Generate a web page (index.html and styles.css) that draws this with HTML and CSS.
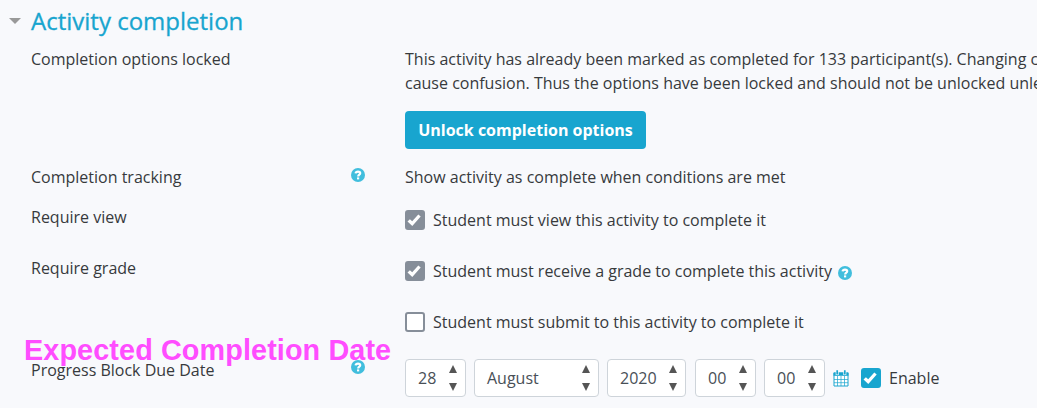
FILE: index.html
```html
<!DOCTYPE html>
<html lang="en">
<head>
    <meta charset="UTF-8">
    <meta name="viewport" content="width=device-width, initial-scale=1.0">
    <title>Activity completion</title>
    <link rel="stylesheet" href="styles.css">
</head>
<body>
    <!-- Shared icons -->
    <svg class="icon-defs" aria-hidden="true">
        <symbol id="icon-help" viewBox="0 0 14 14">
            <circle cx="7" cy="7" r="7" fill="#41bedd"/>
            <path d="M4.600 5.300C4.800 4 5.800 3.600 7 3.600c1.300 0 2.200.6 2.200 1.700C9.200 6.800 7.200 6.600 7.200 8.500" fill="none" stroke="#fff" stroke-width="2.200"/>
            <rect x="6" y="9.400" width="2.200" height="2" fill="#fff"/>
        </symbol>
        <symbol id="icon-check" viewBox="0 0 20 20">
            <path d="M2.500 11.500L4.900 9.300L7.200 11.300L13.300 4.600L15.700 6.600L7.300 15.900z" fill="#fff"/>
        </symbol>
    </svg>

    <main>
        <header>
            <span class="caret"></span>
            <h1>Activity completion</h1>
        </header>

        <div class="form-row row-locked">
            <div class="label">Completion options locked</div>
            <div class="field">
                <p>This activity has already been marked as completed for 133 participant(s). Changing completion options may<br>cause confusion. Thus the options have been locked and should not be unlocked unless absolutely necessary.</p>
                <button class="unlock-button">Unlock completion options</button>
            </div>
        </div>

        <div class="form-row row-tracking">
            <div class="label">Completion tracking <svg class="help"><use href="#icon-help"/></svg></div>
            <div class="field">Show activity as complete when conditions are met</div>
        </div>

        <div class="form-row">
            <div class="label">Require view</div>
            <div class="field check-line">
                <span class="checkbox locked"><svg><use href="#icon-check"/></svg></span>
                <span>Student must view this activity to complete it</span>
            </div>
        </div>

        <div class="form-row">
            <div class="label">Require grade</div>
            <div class="field check-line">
                <span class="checkbox locked"><svg><use href="#icon-check"/></svg></span>
                <span>Student must receive a grade to complete this activity</span>
                <svg class="help help-inline"><use href="#icon-help"/></svg>
            </div>
        </div>

        <div class="form-row">
            <div class="label"></div>
            <div class="field check-line">
                <span class="checkbox"></span>
                <span>Student must submit to this activity to complete it</span>
            </div>
        </div>

        <div class="form-row row-date">
            <div class="label">
                Progress Block Due Date
                <svg class="help"><use href="#icon-help"/></svg>
                <span class="note">Expected Completion Date</span>
            </div>
            <div class="field date-line">
                <div class="select">28<span class="arrows"></span></div>
                <div class="select month">August<span class="arrows"></span></div>
                <div class="select year">2020<span class="arrows"></span></div>
                <div class="select">00<span class="arrows"></span></div>
                <div class="select">00<span class="arrows"></span></div>
                <svg class="calendar" viewBox="0 0 16 17">
                    <path d="M1 3h14v13H1z" fill="#fff" stroke="#18a5cf"/>
                    <path d="M.5 2.500h15v3.300H.5z" fill="#18a5cf"/>
                    <path d="M4.500 6v10M8 6v10M11.500 6v10M1 9.500h14M1 12.700h14" stroke="#18a5cf" stroke-width=".7"/>
                    <path d="M4.200 0v5M11.800 0v5" stroke="#f8f9fc" stroke-width="3"/>
                    <path d="M4.200 .3v4.200M11.800 .3v4.200" stroke="#18a5cf" stroke-width="1.700"/>
                </svg>
                <span class="checkbox enabled"><svg><use href="#icon-check"/></svg></span>
                <span>Enable</span>
            </div>
        </div>
    </main>
</body>
</html>
```

FILE: styles.css
```css
* {
    margin: 0;
    padding: 0;
    box-sizing: border-box;
}

body {
    font-family: 'Open Sans', sans-serif;
    font-size: 16px;
    line-height: 24px;
    background-color: #f8f9fc;
    color: #373a3c;
    overflow: hidden;
}

main {
    padding-left: 31px;
}

.icon-defs {
    display: none;
}

header {
    display: flex;
    align-items: center;
    height: 47px;
    margin-left: -22px;
    padding-bottom: 5px;
    gap: 10px;
}

.caret {
    border: 6px solid transparent;
    border-top-color: #999;
    border-bottom: 0;
}

h1 {
    font-size: 24px;
    font-weight: 400;
    color: #18a5cf;
    -webkit-text-stroke: 0.3px #18a5cf;
}

/* Form rows */
.form-row {
    display: grid;
    grid-template-columns: 374px 1fr;
    height: 51px;
}

.row-locked {
    height: 118px;
}

.row-tracking {
    height: 40px;
}

.label {
    display: flex;
    justify-content: space-between;
    position: relative;
    height: 24px;
    padding-right: 40px;
}

.field {
    white-space: nowrap;
}

.help {
    width: 14px;
    height: 14px;
    margin-top: 3px;
}

.row-date .help {
    margin-top: 2px;
}

.unlock-button {
    height: 38px;
    width: 241px;
    margin-top: 16px;
    background-color: #18a5cf;
    color: white;
    border: none;
    border-radius: 4px;
    font-family: inherit;
    font-size: 16px;
    font-weight: bold;
}

/* Checkboxes */
.check-line {
    display: flex;
    align-items: center;
    height: 24px;
    margin-top: 3px;
    gap: 8px;
}

.checkbox {
    width: 20px;
    height: 20px;
    border: 2px solid #868e99;
    border-radius: 3px;
    background-color: #fff;
}

.checkbox svg {
    display: block;
    width: 20px;
    height: 20px;
    margin: -2px;
}

.locked {
    background-color: #868e99;
}

.enabled {
    background-color: #18a5cf;
    border-color: #18a5cf;
}

.help-inline {
    margin-left: -2px;
}

/* Date selectors */
.date-line {
    display: flex;
    align-items: center;
    height: 38px;
    margin-top: 1px;
    gap: 8px;
}

.select {
    display: flex;
    align-items: center;
    justify-content: space-between;
    width: 61px;
    height: 38px;
    padding: 0 8px 0 12px;
    background-color: #fff;
    border: 1px solid #ced4da;
    border-radius: 4px;
    color: #495057;
}

.month {
    width: 125px;
}

.year {
    width: 79px;
    margin-right: 1px;
}

.arrows {
    display: flex;
    flex-direction: column;
    gap: 10px;
}

.arrows::before,
.arrows::after {
    content: "";
    border: 4.5px solid transparent;
}

.arrows::before {
    border-top: 0;
    border-bottom: 8px solid #555;
}

.arrows::after {
    border-bottom: 0;
    border-top: 8px solid #555;
}

.calendar {
    width: 16px;
    height: 17px;
    margin-right: 4px;
}

/* Annotation over the due date label */
.note {
    position: absolute;
    left: -7px;
    top: -24px;
    font-family: 'Liberation Sans', Arial, sans-serif;
    font-size: 28.800px;
    font-weight: bold;
    letter-spacing: 0.1px;
    line-height: 32px;
    white-space: nowrap;
    color: #ff4dff;
}
```
